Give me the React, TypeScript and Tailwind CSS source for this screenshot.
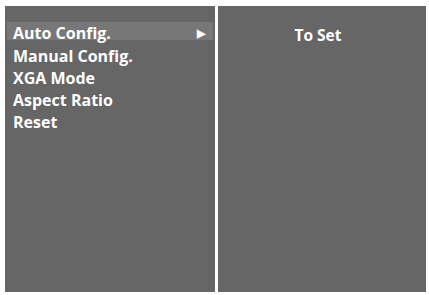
import { ReactNode } from 'react';

const items = ['Auto Config.', 'Manual Config.', 'XGA Mode', 'Aspect Ratio', 'Reset'];

function Panel({ children, className = '' }: { children?: ReactNode; className?: string }) {
  return <div className={`bg-[#666666] h-full ${className}`}>{children}</div>;
}

export default function App() {
  return (
    <div
      className="w-[429px] h-[295px] bg-white pl-[5px] pr-[3px] pt-[6px] pb-[3px] flex gap-[3px]"
      style={{ fontFamily: '"Open Sans", "Liberation Sans", sans-serif' }}
    >
      <Panel className="w-[210px] pt-[16px] px-[2px]">
        <ul className="text-white font-bold text-[16px]">
          {items.map((item, i) => (
            <li
              key={item}
              className={`flex items-center justify-between pl-[6px] pr-[8px] ${
                i === 0 ? 'h-[18px] bg-[#777777] mb-[4px]' : 'h-[22px]'
              }`}
            >
              <span className={i === 0 ? 'leading-[18px] translate-y-[2px]' : 'leading-[22px] translate-y-[1px]'}>
                {item}
              </span>
              {i === 0 && <span className="text-[11px] leading-none translate-y-[1px]">▶</span>}
            </li>
          ))}
        </ul>
      </Panel>
      <Panel className="flex-1 pt-[19px]">
        <p className="text-white font-bold text-[15.5px] text-center pr-[8px] leading-[20px]">To Set</p>
      </Panel>
    </div>
  );
}
